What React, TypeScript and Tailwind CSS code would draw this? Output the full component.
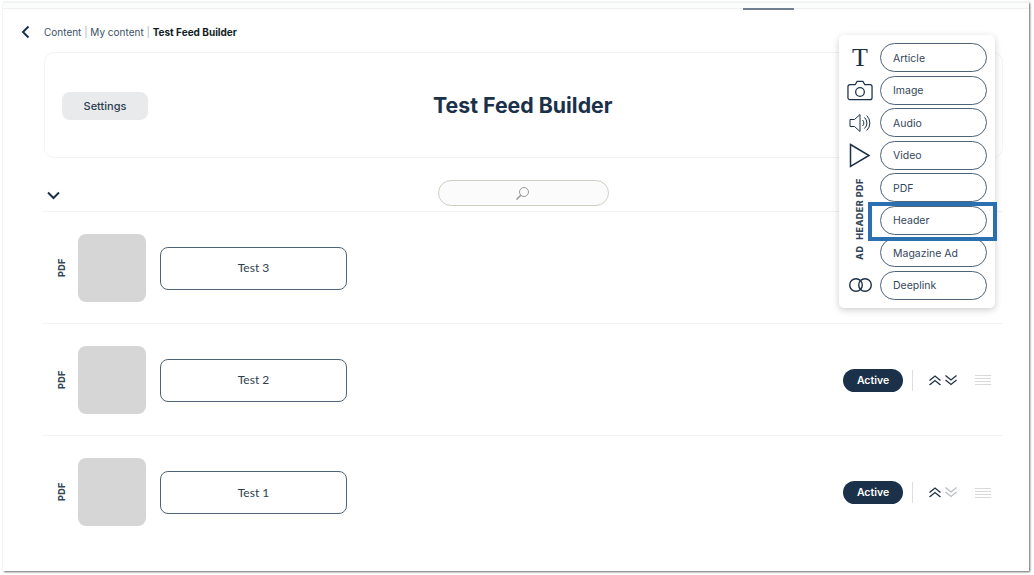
import React from 'react';

const navy = '#1b3149';

function DoubleUp({ muted }: { muted?: boolean }) {
  return (
    <svg width="14" height="13" viewBox="0 0 14 13" fill="none" stroke={muted ? '#b9bdbf' : navy} strokeWidth="1.3">
      <path d="M1.5 6.500 7 2l5.500 4.500" />
      <path d="M1.5 11 7 6.500l5.500 4.500" />
    </svg>
  );
}

function DoubleDown({ muted }: { muted?: boolean }) {
  return (
    <svg width="14" height="13" viewBox="0 0 14 13" fill="none" stroke={muted ? '#b9bdbf' : navy} strokeWidth="1.3">
      <path d="M1.5 1.500 7 6l5.500-4.500" />
      <path d="M1.5 6 7 10.500 12.500 6" />
    </svg>
  );
}

function Row({ title, showControls, downMuted }: { title: string; showControls: boolean; downMuted?: boolean }) {
  return (
    <div className="h-[112px] border-b border-[#f3f3ef] flex items-center pl-[13px] pr-[12px]">
      <div className="w-[10px] flex justify-center">
        <span className="-rotate-90 text-[9px] font-extrabold text-[#33475b] tracking-[0.3px] font-['Inter',sans-serif]">PDF</span>
      </div>
      <div className="ml-[12px] w-[68px] h-[68px] rounded-[8px] bg-[#d6d6d6]" />
      <div className="ml-[14px] mt-[1px] w-[187px] h-[43px] rounded-[8px] border border-[#4f6377] flex items-center justify-center text-[12px] text-[#2f3e4e] font-['Lato',sans-serif]">
        {title}
      </div>
      {showControls && (
        <div className="ml-auto mt-[1px] flex items-center">
          <div className="w-[60px] h-[23px] pt-[1px] rounded-full bg-[#1b3149] text-white text-[10.5px] font-semibold flex items-center justify-center font-['Inter',sans-serif]">
            Active
          </div>
          <div className="ml-[9px] w-px h-[21px] bg-[#dedede]" />
          <div className="ml-[15px] flex items-center gap-[2px]">
            <DoubleUp />
            <DoubleDown muted={downMuted} />
          </div>
          <div className="ml-[17px] w-[16px] flex flex-col gap-[2px]">
            <div className="h-px bg-[#d9d9d9]" />
            <div className="h-px bg-[#d9d9d9]" />
            <div className="h-px bg-[#d9d9d9]" />
            <div className="h-px bg-[#d9d9d9]" />
          </div>
        </div>
      )}
    </div>
  );
}

function MenuIcon({ name }: { name: string }) {
  if (name === 'Article') {
    return <span className="text-[26px] leading-none text-[#1b3149] font-['Liberation_Serif',serif]">T</span>;
  }
  if (name === 'Image') {
    return (
      <svg width="27" height="21" viewBox="0 0 27 21" fill="none" stroke={navy} strokeWidth="1.3">
        <path d="M3 4.5h5.5L10.5 1h6l2 3.5H24a2 2 0 0 1 2 2V18a2 2 0 0 1-2 2H3a2 2 0 0 1-2-2V6.500a2 2 0 0 1 2-2Z" />
        <circle cx="13.500" cy="12" r="4.500" />
      </svg>
    );
  }
  if (name === 'Audio') {
    return (
      <svg width="22" height="20" viewBox="0 0 22 20" fill="none" stroke={navy} strokeWidth="1">
        <path d="M1 6.500h4.500L11 1.500v17l-5.500-5H1Z" />
        <path d="M13.500 7a4 4 0 0 1 0 6" />
        <path d="M15.500 4.500a7.500 7.500 0 0 1 0 11" />
        <path d="M17.700 2.500a10.500 10.500 0 0 1 0 15" />
      </svg>
    );
  }
  if (name === 'Video') {
    return (
      <svg width="22" height="25" viewBox="0 0 22 25" fill="none" stroke={navy} strokeWidth="1.5">
        <path d="M1.500 1.500 20 12.500 1.500 23.500Z" />
      </svg>
    );
  }
  if (name === 'Deeplink') {
    return (
      <svg width="25" height="14" viewBox="0 0 25 14" fill="none" stroke={navy} strokeWidth="1.4">
        <circle cx="8" cy="7" r="6.300" />
        <circle cx="17" cy="7" r="6.300" />
      </svg>
    );
  }
  const label = name === 'PDF' ? 'PDF' : name === 'Header' ? 'HEADER' : 'AD';
  return (
    <span className="-rotate-90 text-[9px] font-extrabold text-[#33475b] tracking-[0.5px] whitespace-nowrap">{label}</span>
  );
}

const menuItems = ['Article', 'Image', 'Audio', 'Video', 'PDF', 'Header', 'Magazine Ad', 'Deeplink'];

export default function App() {
  return (
    <div className="relative w-[1034px] h-[575px] bg-white overflow-hidden font-['Inter',sans-serif]">
      {/* Window frame */}
      <div className="relative ml-[3px] mt-[2px] w-[1026px] h-[569px] bg-white border-t border-[#eef2f1] shadow-[1px_1px_2px_#666]">
        <div className="h-[6px] border-b border-[#edf1f0] bg-[#fbfcfc]">
          <div className="ml-[740px] w-[51px] h-[7px] border-b-2 border-[#6d7f91]" />
        </div>

        {/* Breadcrumb */}
        <div className="h-[43px] flex items-center pl-[17px] pt-[3px]">
          <svg width="11" height="14" viewBox="0 0 11 14" fill="none" stroke={navy} strokeWidth="2">
            <path d="M8.500 1.500 3 7l5.500 5.500" />
          </svg>
          <div className="ml-[13px] text-[10px] text-[#3c5166] whitespace-nowrap">
            Content <span className="text-[#a9b3bd]">|</span> My content <span className="text-[#a9b3bd]">|</span>{' '}
            <span className="font-bold text-[#111c26]">Test Feed Builder</span>
          </div>
        </div>

        {/* Header card */}
        <div className="ml-[41px] mr-[26px] h-[106px] rounded-[10px] border border-[#f3f3f1] flex items-center pl-[17px]">
          <div className="mt-[2px] w-[86px] h-[28px] rounded-[8px] bg-[#e9eaeb] flex items-center justify-center text-[11px] font-medium text-[#2b3e51]">
            Settings
          </div>
          <div className="mt-[1px] ml-[285px] text-[21.300px] font-bold text-[#1b3149] whitespace-nowrap">Test Feed Builder</div>
        </div>

        {/* Toolbar */}
        <div className="ml-[40px] mr-[26px] mt-[13px] h-[41px] border-b border-[#f3f3ef] flex items-start pl-[4px]">
          <svg className="mt-[20px]" width="13" height="9" viewBox="0 0 13 9" fill="none" stroke={navy} strokeWidth="2">
            <path d="M1 1.500 6.500 7 12 1.500" />
          </svg>
          <div className="ml-[378px] mt-[9px] w-[171px] h-[26px] rounded-full bg-[#fbfbfb] border border-[#cfcfc4] flex items-center justify-center">
            <svg className="-ml-[3px]" width="15" height="15" viewBox="0 0 15 15" fill="none" stroke="#9a9a9a" strokeWidth="1">
              <circle cx="9" cy="6" r="4.500" />
              <path d="M5.800 9.200 1.500 13.500" strokeWidth="1.600" />
            </svg>
          </div>
        </div>

        {/* Rows */}
        <div className="ml-[40px] mr-[26px]">
          <Row title="Test 3" showControls={false} />
          <Row title="Test 2" showControls />
          <div className="[&>div]:border-b-0">
            <Row title="Test 1" showControls downMuted />
          </div>
        </div>
      </div>

      {/* Add content menu */}
      <div className="absolute left-[839px] top-[35px] w-[156px] h-[273px] bg-white rounded-[5px] shadow-[0_2px_7px_rgba(0,0,0,0.2)] pt-[8px] pl-[8px] flex flex-col gap-[3.500px]">
        {menuItems.map((name) => (
          <div key={name} className="flex items-center h-[29px]">
            <div className="w-[26px] flex items-center justify-center">
              <MenuIcon name={name} />
            </div>
            <div className="ml-[7px] w-[107px] h-[29px] rounded-full border border-[#4f6377] flex items-center pl-[12px] pt-[2px] text-[10.5px] text-[#33475b] whitespace-nowrap">
              {name}
            </div>
          </div>
        ))}
      </div>

      {/* Highlight box */}
      <div className="absolute left-[868px] top-[202px] w-[129px] h-[39px] border-[4px] border-[#2a6fb0]" />
    </div>
  );
}
